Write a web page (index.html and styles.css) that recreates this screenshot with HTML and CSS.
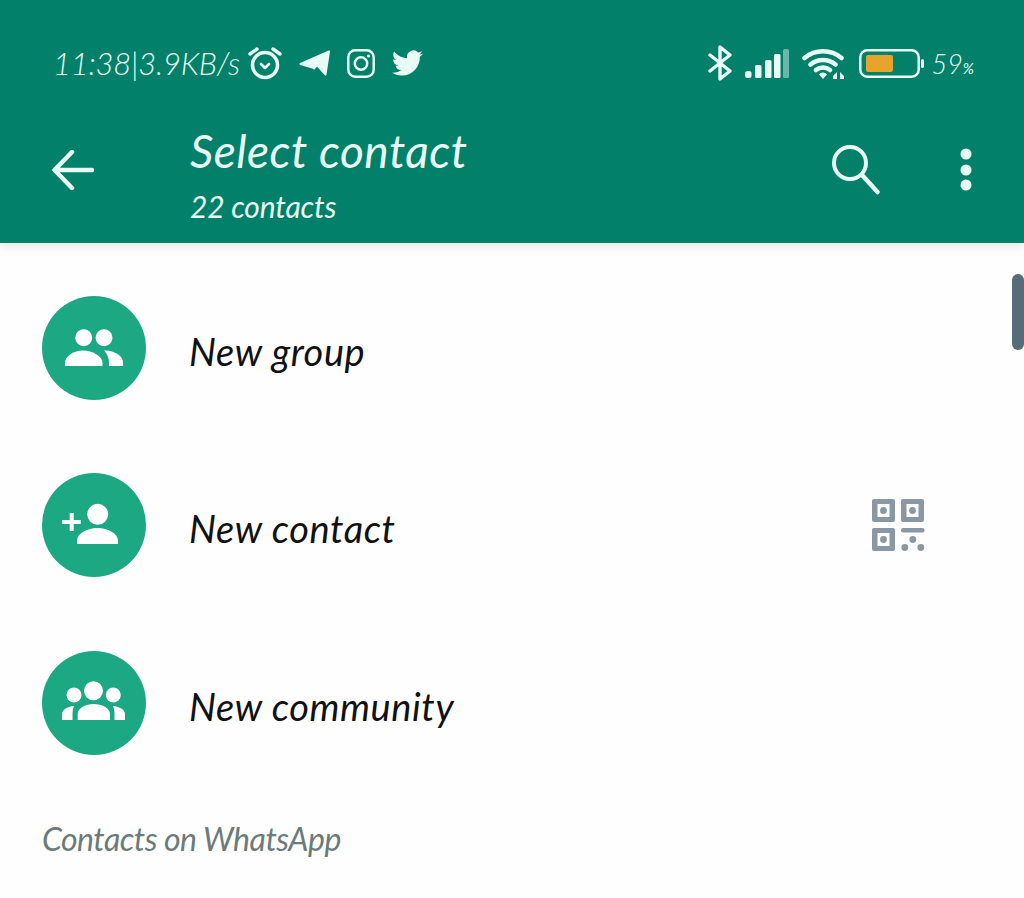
FILE: index.html
```html
<!DOCTYPE html>
<html lang="en">
<head>
    <meta charset="UTF-8">
    <meta name="viewport" content="width=device-width, initial-scale=1.0">
    <title>Select contact</title>
    <link rel="stylesheet" href="styles.css">
</head>
<body>
    <header class="header">
        <div class="status">
            <div class="status-left">
                <span class="status-text">11:38|3.9KB/s</span>
                <svg class="st-alarm" width="34" height="34" viewBox="0 0 34 34">
                    <circle cx="17" cy="19" r="12.5" fill="none" stroke="currentColor" stroke-width="3.5"/>
                    <path d="M13 18l4 4 4-4" fill="none" stroke="currentColor" stroke-width="2.8" stroke-linecap="round" stroke-linejoin="round"/>
                    <path d="M2 8l7-5M32 8l-7-5" fill="none" stroke="currentColor" stroke-width="3.4" stroke-linecap="round"/>
                </svg>
                <svg width="31" height="26" viewBox="0 0 31 26">
                    <path d="M30 1.500L1.500 14l12 3.500 1.500 1 3-3.500 8.500 9.500z" fill="currentColor" stroke="currentColor" stroke-width="2" stroke-linejoin="round"/>
                </svg>
                <svg width="28" height="29" viewBox="0 0 28 29">
                    <rect x="1.300" y="1.300" width="25.400" height="26.400" rx="7" fill="none" stroke="currentColor" stroke-width="2.500"/>
                    <circle cx="14" cy="14.500" r="6.200" fill="none" stroke="currentColor" stroke-width="2.500"/>
                    <circle cx="21.500" cy="7" r="1.600" fill="currentColor"/>
                </svg>
                <svg width="31" height="26" viewBox="0 0 24 20">
                    <path transform="translate(0 -2)" d="M23.953 4.57a10 10 0 01-2.825.775 4.958 4.958 0 002.163-2.723c-.951.555-2.005.959-3.127 1.184a4.92 4.92 0 00-8.384 4.482C7.69 8.095 4.067 6.13 1.64 3.162a4.822 4.822 0 00-.666 2.475c0 1.71.87 3.213 2.188 4.096a4.904 4.904 0 01-2.228-.616v.06a4.923 4.923 0 003.946 4.827 4.996 4.996 0 01-2.212.085 4.936 4.936 0 004.604 3.417 9.867 9.867 0 01-6.102 2.105c-.39 0-.779-.023-1.17-.067a13.995 13.995 0 007.557 2.209c9.053 0 13.998-7.496 13.998-13.985 0-.21 0-.42-.015-.63A9.935 9.935 0 0024 4.59z" fill="currentColor"/>
                </svg>
            </div>
            <div class="status-right">
                <svg width="24" height="36" viewBox="0 0 24 36">
                    <path d="M2 10l20 16-10 8V2l10 8L2 26" fill="none" stroke="currentColor" stroke-width="3.400" stroke-linecap="round" stroke-linejoin="round"/>
                </svg>
                <svg width="44" height="29" viewBox="0 0 44 29">
                    <rect x="0" y="22" width="6.500" height="7" rx="2.500" fill="currentColor"/>
                    <rect x="10" y="16" width="6.500" height="13" rx="1.500" fill="currentColor"/>
                    <rect x="20" y="11" width="6.500" height="18" rx="1.500" fill="currentColor"/>
                    <rect x="29" y="5" width="6.500" height="24" rx="1.500" fill="currentColor"/>
                    <rect x="38" y="0" width="6" height="29" rx="1.500" fill="currentColor" opacity="0.45"/>
                </svg>
                <svg width="44" height="33" viewBox="0 0 44 33">
                    <path d="M2.500 11A29 29 0 0 1 39.500 11M8.500 17.500A20 20 0 0 1 33.500 17.500M14 23A11 11 0 0 1 28 23" fill="none" stroke="currentColor" stroke-width="4.500" stroke-linecap="round"/>
                    <path d="M17 27.500a5 5 0 0 1 8 0l-4 4.500z" fill="currentColor"/>
                    <path d="M31 29l4-4v7h-4zM38 25l4 4v3h-4z" fill="currentColor"/>
                </svg>
                <svg width="65" height="29" viewBox="0 0 65 29">
                    <rect x="1.300" y="1.300" width="58.400" height="26.400" rx="7" fill="none" stroke="currentColor" stroke-width="2.500"/>
                    <rect x="7" y="6" width="27" height="17" rx="2" fill="#e8a32c"/>
                    <rect x="62" y="10" width="3" height="9" rx="1.500" fill="currentColor"/>
                </svg>
                <span class="status-pct">59<small>%</small></span>
            </div>
        </div>
        <div class="appbar">
            <svg class="back" width="42" height="40" viewBox="0 0 42 40">
                <path d="M40 20H3M20 2L2.500 20 20 38" fill="none" stroke="currentColor" stroke-width="4.500" stroke-linecap="round" stroke-linejoin="round"/>
            </svg>
            <div class="titles">
                <h1 class="title">Select contact</h1>
                <p class="subtitle">22 contacts</p>
            </div>
            <div class="actions">
                <svg width="49" height="50" viewBox="0 0 49 50">
                    <circle cx="19" cy="18" r="16" fill="none" stroke="currentColor" stroke-width="4"/>
                    <path d="M31 30l15.500 17" fill="none" stroke="currentColor" stroke-width="4.500" stroke-linecap="round"/>
                </svg>
                <svg width="12" height="44" viewBox="0 0 12 44">
                    <circle cx="6" cy="6" r="5.500" fill="currentColor"/>
                    <circle cx="6" cy="22" r="5.500" fill="currentColor"/>
                    <circle cx="6" cy="37" r="5.500" fill="currentColor"/>
                </svg>
            </div>
        </div>
    </header>

    <main class="list">
        <div class="scrollbar"></div>

        <div class="row">
            <svg class="avatar" width="104" height="104" viewBox="0 0 104 104">
                <circle cx="52" cy="52" r="52" fill="#1ca883"/>
                <circle cx="41.700" cy="41.700" r="8.500" fill="#fff"/>
                <circle cx="62" cy="41.700" r="8.500" fill="#fff"/>
                <path d="M23 70v-3c0-7 9-12.500 18-12.500S60.500 60 60.500 67v3z" fill="#fff"/>
                <path d="M62 54.500C72 54 81 60 81 66v4H67v-4c0-4-2-8.500-5-11.500z" fill="#fff"/>
            </svg>
            <span class="row-label">New group</span>
        </div>

        <div class="row">
            <svg class="avatar" width="104" height="104" viewBox="0 0 104 104">
                <circle cx="52" cy="52" r="52" fill="#1ca883"/>
                <circle cx="55.700" cy="41.300" r="10.500" fill="#fff"/>
                <path d="M35 71v-3c0-8 11-13 20.500-13S76 60 76 68v3z" fill="#fff"/>
                <path d="M27.700 40h4v7h7v4h-7v7h-4v-7h-7.500v-4h7.500z" fill="#fff"/>
            </svg>
            <span class="row-label">New contact</span>
            <svg class="qr" width="53" height="52" viewBox="0 0 53 52">
                <path fill-rule="evenodd" d="M2 0h19a2 2 0 0 1 2 2v19a2 2 0 0 1-2 2H2a2 2 0 0 1-2-2V2a2 2 0 0 1 2-2zm3.500 5v13h12V5z" fill="#8a98a3"/>
                <circle cx="11.500" cy="11.500" r="3.400" fill="#8a98a3"/>
                <path fill-rule="evenodd" d="M31 0h19a2 2 0 0 1 2 2v19a2 2 0 0 1-2 2H31a2 2 0 0 1-2-2V2a2 2 0 0 1 2-2zm3.500 5v13h12V5z" fill="#8a98a3"/>
                <circle cx="40.500" cy="11.500" r="3.400" fill="#8a98a3"/>
                <path fill-rule="evenodd" d="M2 29h19a2 2 0 0 1 2 2v19a2 2 0 0 1-2 2H2a2 2 0 0 1-2-2V31a2 2 0 0 1 2-2zm3.500 5v13h12V34z" fill="#8a98a3"/>
                <circle cx="11.500" cy="40.500" r="3.400" fill="#8a98a3"/>
                <rect x="29" y="29" width="23.500" height="4.500" rx="2" fill="#8a98a3"/>
                <circle cx="40.800" cy="40.500" r="3.400" fill="#8a98a3"/>
                <circle cx="32.800" cy="48.500" r="3.400" fill="#8a98a3"/>
                <circle cx="48.800" cy="48.500" r="3.400" fill="#8a98a3"/>
            </svg>
        </div>

        <div class="row">
            <svg class="avatar" width="104" height="104" viewBox="0 0 104 104">
                <circle cx="52" cy="52" r="52" fill="#1ca883"/>
                <circle cx="51.500" cy="39.700" r="9.500" fill="#fff"/>
                <circle cx="32" cy="44" r="7.500" fill="#fff"/>
                <circle cx="71.300" cy="44" r="7.500" fill="#fff"/>
                <path d="M35.700 69v-6c0-6 8-10 16-10s16.300 4 16.300 10v6z" fill="#fff"/>
                <path d="M20 69v-6c0-4 5-7.500 12-8-1 2-1.500 5-1.500 8v6z" fill="#fff"/>
                <path d="M83 69v-6c0-4-5-7.500-12-8 1 2 1.500 5 1.500 8v6z" fill="#fff"/>
            </svg>
            <span class="row-label">New community</span>
        </div>

        <h2 class="section">Contacts on WhatsApp</h2>
    </main>
</body>
</html>
```

FILE: styles.css
```css
* {
    box-sizing: border-box;
}
body {
    margin: 0;
    height: 898px;
    overflow: hidden;
    background: #fefefe;
    font-family: 'Lato', sans-serif;
    font-style: italic;
}
svg {
    display: block;
    flex: none;
}
.header {
    height: 243px;
    padding-top: 40px;
    background: #028069;
    color: #e8fbf5;
    box-shadow: 0 3px 10px rgba(0, 0, 0, 0.1);
}
.status {
    display: flex;
    justify-content: space-between;
    align-items: center;
    height: 46px;
    padding: 0 50px 0 53px;
}
.status-left {
    display: flex;
    align-items: center;
    gap: 17px;
}
.status-text {
    width: 178px;
    font-size: 31px;
    font-weight: 300;
    letter-spacing: -0.25px;
    white-space: nowrap;
}
.status-right {
    display: flex;
    align-items: center;
    gap: 13px;
}
.status-pct {
    margin-left: -5px;
    font-size: 27px;
    font-weight: 300;
}
.status-pct small {
    font-size: 15px;
    font-weight: 400;
}
.appbar {
    display: flex;
    align-items: center;
    height: 157px;
    padding: 11px 52px 0;
}
.back {
    margin-right: 96px;
}
.titles {
    margin-top: 5px;
}
.title {
    margin: 0;
    font-size: 46px;
    font-weight: 400;
    line-height: 56px;
    letter-spacing: 0.5px;
}
.subtitle {
    margin: 11px 0 0;
    font-size: 30px;
    font-weight: 400;
    line-height: 32px;
    letter-spacing: -0.2px;
}
.actions {
    display: flex;
    align-items: center;
    gap: 80px;
    margin-left: auto;
}
.list {
    position: relative;
    padding-top: 16px;
}
.scrollbar {
    position: absolute;
    top: 31px;
    right: 0;
    width: 12px;
    height: 76px;
    border-radius: 6px;
    background: #566c78;
}
.row {
    display: flex;
    align-items: center;
    height: 177.5px;
    padding: 0 99px 0 42px;
}
.avatar {
    margin-right: 43px;
}
.row-label {
    padding-top: 6px;
    font-size: 38px;
    letter-spacing: 0.6px;
    color: #111;
}
.qr {
    margin-left: auto;
}
.section {
    margin: 27px 0 0 42px;
    font-size: 32px;
    font-weight: 400;
    letter-spacing: -0.5px;
    color: #6b7b7b;
}
```
